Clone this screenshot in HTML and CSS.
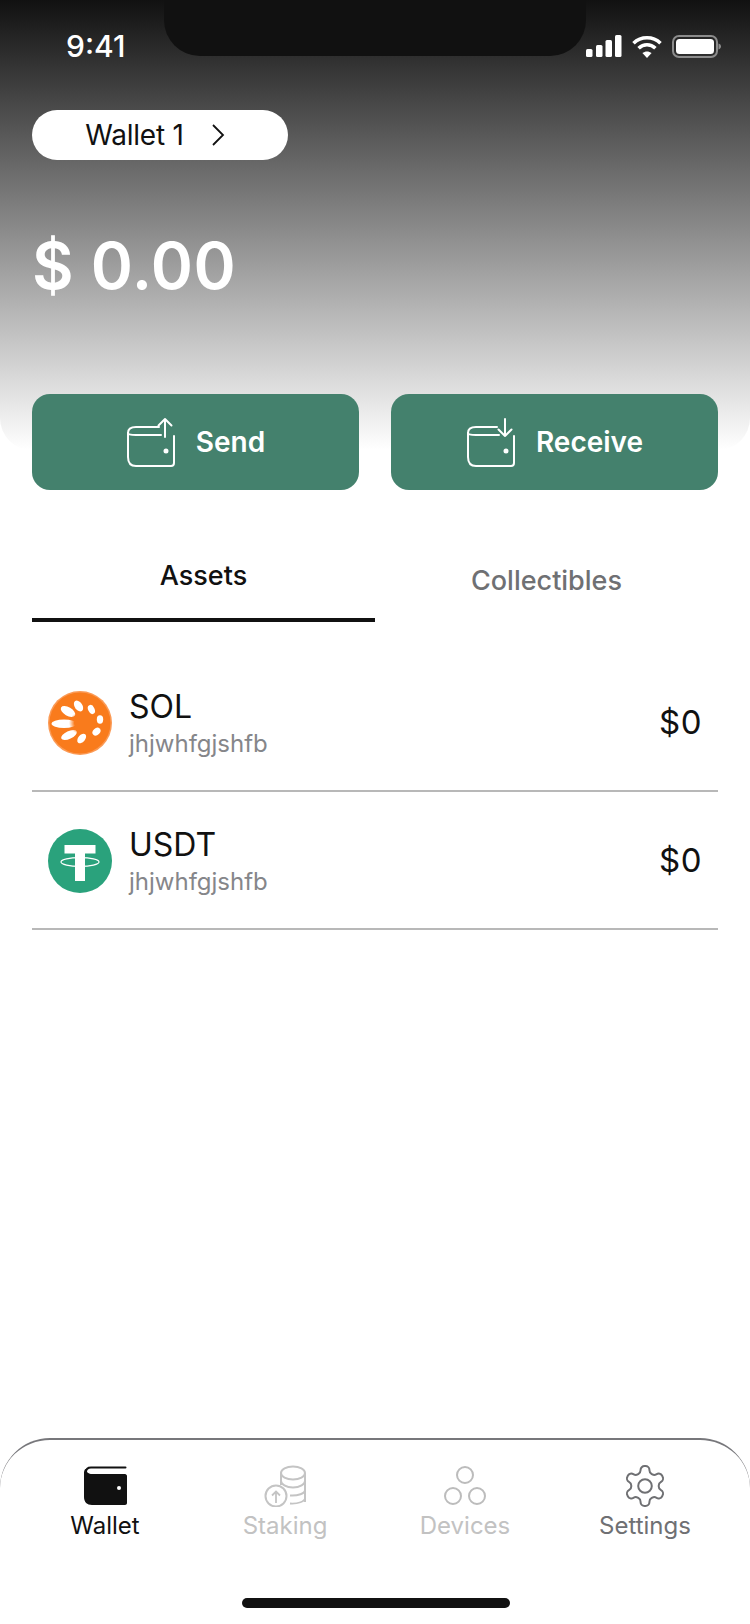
FILE: index.html
```html
<!DOCTYPE html>
<html lang="en">
<head>
  <meta charset="UTF-8">
  <meta name="viewport" content="width=device-width, initial-scale=1.0">
  <title>Wallet</title>
  <link rel="stylesheet" href="styles.css">
</head>
<body>
<div class="app">

  <!-- Top gradient -->
  <header class="hero">
    <div class="notch"></div>
    <div class="status-bar">
      <span class="time">9:41</span>
      <div class="status-icons">
        <svg width="36" height="22" viewBox="0 0 36 22" fill="#fff">
          <rect x="0" y="14" width="6.5" height="8" rx="1.5"/>
          <rect x="10" y="10" width="6.5" height="12" rx="1.5"/>
          <rect x="19.5" y="5" width="6.5" height="17" rx="1.5"/>
          <rect x="29" y="0" width="6.5" height="22" rx="1.5"/>
        </svg>
        <svg width="30" height="23" viewBox="0 0 30 23" fill="none" stroke="#fff" stroke-width="3.6">
          <path d="M1.5 8.2C9 1 21 1 28.5 8.2"/>
          <path d="M6.6 13.2C11.5 8.6 18.5 8.6 23.4 13.2"/>
          <path d="M15 23l-4.6-5c2.7-2.1 6.5-2.1 9.2 0z" fill="#fff" stroke="none"/>
        </svg>
        <svg width="49" height="23" viewBox="0 0 49 23" fill="none">
          <rect x="1" y="1" width="44" height="21" rx="6" stroke="#8c8c8c" stroke-width="2"/>
          <rect x="4" y="4" width="38" height="15" rx="3.5" fill="#fff"/>
          <path d="M46.5 8.5c1.5.4 2.5 1.6 2.5 3s-1 2.6-2.5 3z" fill="#8c8c8c"/>
        </svg>
      </div>
    </div>

    <div class="wallet-pill">
      <span>Wallet 1</span>
      <svg width="14" height="22" viewBox="0 0 14 22" fill="none" stroke="#111" stroke-width="1.8">
        <path d="M2 1l10 10L2 21"/>
      </svg>
    </div>

    <div class="balance">$ 0.00</div>
  </header>

  <div class="actions">
    <button class="action-btn">
      <svg width="50" height="50" viewBox="0 0 50 50" fill="none" stroke="#fff" stroke-width="2" stroke-linecap="round" stroke-linejoin="round">
        <path d="M33 10H10C5 10 2 12 2 16v24c0 6 3 9 8 9h35c2 0 3-1 3-3V19"/>
        <path d="M2 16c0 1.5 3 2 8 2h25"/>
        <path d="M39 20V2M32.5 8.5L39 2l6.5 6.500"/>
        <circle cx="40" cy="34" r="1.5" fill="#fff"/>
      </svg>
      <span>Send</span>
    </button>
    <button class="action-btn">
      <svg width="50" height="50" viewBox="0 0 50 50" fill="none" stroke="#fff" stroke-width="2" stroke-linecap="round" stroke-linejoin="round">
        <path d="M31 10H10C5 10 2 12 2 16v24c0 6 3 9 8 9h35c2 0 3-1 3-3V19"/>
        <path d="M2 16c0 1.5 3 2 8 2h23"/>
        <path d="M39 2v17M32.5 12.5L39 19l6.5-6.500"/>
        <circle cx="40" cy="34" r="1.5" fill="#fff"/>
      </svg>
      <span>Receive</span>
    </button>
  </div>

  <div class="tabs">
    <div class="tab active">Assets</div>
    <div class="tab">Collectibles</div>
  </div>

  <!-- Assets -->
  <div class="asset-list">
    <div class="asset">
      <svg class="coin" width="64" height="64" viewBox="0 0 64 64">
        <defs>
          <radialGradient id="sol-fade">
            <stop offset="0.5" stop-color="#f97b1c"/>
            <stop offset="1" stop-color="#f97b1c" stop-opacity="0"/>
          </radialGradient>
        </defs>
        <circle cx="32" cy="32" r="32" fill="#fb9a55"/>
        <circle cx="32" cy="32" r="30.5" fill="#f97b1c"/>
        <g fill="#fff">
          <ellipse cx="16" cy="32.7" rx="12.5" ry="4.2"/>
          <ellipse cx="20" cy="20.5" rx="8" ry="4.2" transform="rotate(30 20 20.5)"/>
          <ellipse cx="30.5" cy="15" rx="6" ry="3.8" transform="rotate(55 30.5 15)"/>
          <ellipse cx="43.4" cy="18.5" rx="4.8" ry="3.2" transform="rotate(65 43.4 18.5)"/>
          <ellipse cx="52" cy="28.5" rx="4.2" ry="3.2" transform="rotate(90 52 28.5)"/>
          <ellipse cx="48.5" cy="40.6" rx="4.5" ry="3.4" transform="rotate(-45 48.5 40.6)"/>
          <ellipse cx="33.7" cy="47.5" rx="5.5" ry="3.5" transform="rotate(-50 33.7 47.5)"/>
          <ellipse cx="21" cy="44" rx="8.5" ry="3.8" transform="rotate(-25 21 44)"/>
        </g>
        <circle cx="32" cy="32" r="11" fill="url(#sol-fade)"/>
      </svg>
      <div class="asset-info">
        <div class="asset-name">SOL</div>
        <div class="asset-sub">jhjwhfgjshfb</div>
      </div>
      <div class="asset-value">$0</div>
    </div>
    <div class="asset">
      <svg class="coin" width="64" height="64" viewBox="0 0 64 64">
        <circle cx="32" cy="32" r="32" fill="#2aa27c"/>
        <path d="M16.5 16h31v8.500H37V52H27V24.500H16.5z" fill="#fff"/>
        <ellipse cx="32" cy="33" rx="19" ry="4.300" fill="none" stroke="#fff" stroke-width="1.2"/>
      </svg>
      <div class="asset-info">
        <div class="asset-name">USDT</div>
        <div class="asset-sub">jhjwhfgjshfb</div>
      </div>
      <div class="asset-value">$0</div>
    </div>
  </div>

  <!-- Bottom nav -->
  <nav class="nav">
    <div class="nav-item active">
      <svg width="44" height="42" viewBox="0 0 44 42">
        <path d="M3 7C3 4 5 2.5 8 2.5h34.5" fill="none" stroke="#111" stroke-width="2" stroke-linecap="round"/>
        <path d="M1 9c0-4 1-5 2-5 0 3 3 5 6 5h33c1 0 2 1 2 2v27c0 1-1 2-2 2H9c-5 0-8-3-8-8z" fill="#111"/>
        <circle cx="36" cy="23" r="2" fill="#fff"/>
      </svg>
      <span>Wallet</span>
    </div>
    <div class="nav-item muted">
      <svg width="44" height="42" viewBox="0 0 44 42" fill="none" stroke="#c4c4c4" stroke-width="2">
        <ellipse cx="30" cy="8" rx="12" ry="6.5"/>
        <path d="M18 8v12M42 8v29"/>
        <path d="M18 16c0 3 5 6.5 12 6.5s12-3.5 12-6.5"/>
        <path d="M27 30.500c8 .5 15-2 15-5.500"/>
        <path d="M27 38.500c8 .5 15-2 15-5.500" stroke-width="1.8"/>
        <circle cx="13" cy="31" r="10.5"/>
        <path d="M13 38V26.500M9 30.500l4-4 4 4" stroke-width="1.8"/>
      </svg>
      <span>Staking</span>
    </div>
    <div class="nav-item muted">
      <svg width="44" height="42" viewBox="0 0 44 42" fill="none" stroke="#bcbcbc" stroke-width="2">
        <circle cx="22" cy="10" r="8"/>
        <circle cx="10" cy="31" r="8"/>
        <circle cx="34" cy="31" r="8"/>
      </svg>
      <span>Devices</span>
    </div>
    <div class="nav-item dim">
      <svg width="44" height="42" viewBox="1.5 1.5 21 21" fill="none" stroke="#6f7073" stroke-width="1" stroke-linejoin="round">
        <path d="M12.22 2h-.44a2 2 0 0 0-2 2v.18a2 2 0 0 1-1 1.73l-.43.25a2 2 0 0 1-2 0l-.15-.08a2 2 0 0 0-2.73.73l-.22.38a2 2 0 0 0 .73 2.73l.15.1a2 2 0 0 1 1 1.72v.51a2 2 0 0 1-1 1.74l-.15.09a2 2 0 0 0-.73 2.73l.22.38a2 2 0 0 0 2.73.73l.15-.08a2 2 0 0 1 2 0l.43.25a2 2 0 0 1 1 1.73V20a2 2 0 0 0 2 2h.44a2 2 0 0 0 2-2v-.18a2 2 0 0 1 1-1.73l.43-.25a2 2 0 0 1 2 0l.15.08a2 2 0 0 0 2.73-.73l.22-.39a2 2 0 0 0-.73-2.73l-.15-.08a2 2 0 0 1-1-1.74v-.5a2 2 0 0 1 1-1.74l.15-.09a2 2 0 0 0 .73-2.73l-.22-.38a2 2 0 0 0-2.73-.73l-.15.08a2 2 0 0 1-2 0l-.43-.25a2 2 0 0 1-1-1.73V4a2 2 0 0 0-2-2z"/>
        <circle cx="12" cy="12" r="3.4"/>
      </svg>
      <span>Settings</span>
    </div>
  </nav>

  <div class="home-bar"></div>
</div>
</body>
</html>
```

FILE: styles.css
```css
* {
  box-sizing: border-box;
  margin: 0;
  padding: 0;
}
body {
  background: #fff;
  color: #111;
  font-family: Inter, "Liberation Sans", sans-serif;
}
.app {
  width: 750px;
  height: 1624px;
  display: flex;
  flex-direction: column;
  overflow: hidden;
}

/* header */
.hero {
  position: relative;
  height: 450px;
  padding: 30px 32px 0;
  background: linear-gradient(180deg, #111 0, #fff 100%);
  border-radius: 0 0 32px 32px;
}
.notch {
  position: absolute;
  top: 0;
  left: 164px;
  width: 422px;
  height: 56px;
  background: #111;
  border-radius: 0 0 36px 36px;
}
.status-bar {
  display: flex;
  justify-content: space-between;
  align-items: center;
  height: 32px;
  padding-left: 34px;
  margin-right: -3px;
}
.time { color: #fff; font-size: 30px; font-weight: 500; }
.status-icons { display: flex; align-items: center; gap: 10px; }

.wallet-pill {
  display: flex;
  align-items: center;
  justify-content: center;
  gap: 27px;
  width: 256px;
  height: 50px;
  margin-top: 48px;
  padding-right: 10px;
  background: #fff;
  border-radius: 25px;
  font-size: 28px;
  letter-spacing: -0.2px;
}
.balance {
  margin-top: 63px;
  color: #fff;
  font-size: 64px;
  font-weight: 600;
  line-height: 86px;
  letter-spacing: 0.5px;
}

/* send / receive */
.actions {
  position: relative;
  display: flex;
  gap: 32px;
  margin: -56px 32px 0;
}
.action-btn {
  flex: 1;
  height: 96px;
  display: flex;
  align-items: center;
  justify-content: center;
  gap: 20px;
  border: none;
  border-radius: 18px;
  background: #44816d;
  color: #fff;
  font-family: inherit;
  font-size: 28px;
  font-weight: 600;
}

/* tabs */
.tabs {
  display: flex;
  height: 132px;
  margin: 0 32px;
}
.tab {
  flex: 1;
  display: flex;
  justify-content: center;
  align-items: center;
  color: #6f7073;
  font-size: 27px;
  font-weight: 500;
  padding-top: 49px;
}
.tab.active {
  flex: 0 0 343px;
  color: #111;
  padding-top: 43px;
  border-bottom: 4px solid #111;
}

/* list */
.asset-list {
  flex: 1;
  margin: 32px 32px 0;
}
.asset {
  display: flex;
  align-items: center;
  height: 138px;
  padding: 0 16px;
  border-bottom: 2px solid #b8b8b8;
}
.coin { flex: none; margin-top: 2px; }
.asset-info { flex: 1; margin-left: 17px; margin-top: 5px; }
.asset-name { font-size: 32px; line-height: 36px; }
.asset-sub { font-size: 24px; line-height: 32px; margin-top: 3px; color: #85868a; }
.asset-value { font-size: 33px; letter-spacing: 0.5px; }

/* bottom nav */
.nav {
  display: grid;
  grid-template-columns: repeat(4, 1fr);
  height: 151px;
  padding: 25px 15px 0;
  border-top: 2px solid #77777b;
  border-radius: 50px 50px 0 0;
}
.nav-item {
  display: flex;
  flex-direction: column;
  align-items: center;
  font-size: 24px;
  line-height: 30px;
}
.nav-item svg { margin-bottom: 4px; }
.nav-item.muted { color: #c2c2c2; }
.nav-item.dim { color: #6f7073; }

.home-bar {
  width: 268px;
  height: 10px;
  margin: 9px 0 16px 242px;
  background: #111;
  border-radius: 5px;
}
```
